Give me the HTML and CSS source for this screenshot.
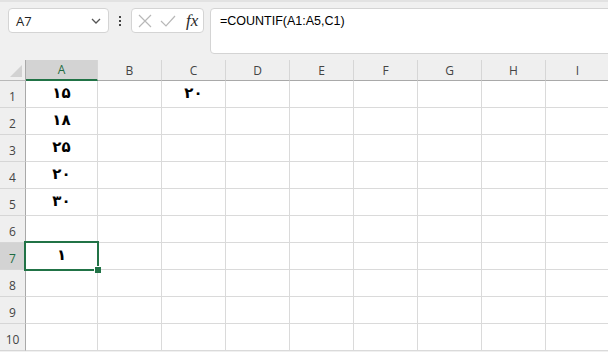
FILE: index.html
```html
<!DOCTYPE html>
<html lang="en">
<head>
    <meta charset="UTF-8">
    <title>COUNTIF</title>
    <link rel="stylesheet" href="styles.css">
</head>
<body>
    <div class="toolbar">
        <div class="name-box">
            <span class="name-text">A7</span>
            <svg class="chevron" width="10" height="6" viewBox="0 0 10 6"><path d="M1 1 L5 5 L9 1" fill="none" stroke="#555" stroke-width="1.3"/></svg>
        </div>
        <div class="grip"><i></i><i></i><i></i></div>
        <div class="fx-box">
            <svg width="14" height="14" viewBox="0 0 14 14"><path d="M1 1 L13 13 M13 1 L1 13" stroke="#b8b8b8" stroke-width="1.2" fill="none"/></svg>
            <svg width="16" height="14" viewBox="0 0 16 14"><path d="M1 7 L6 12 L15 2" stroke="#b8b8b8" stroke-width="1.2" fill="none"/></svg>
            <span class="fx">fx</span>
        </div>
        <div class="formula">=COUNTIF(A1:A5,C1)</div>
    </div>

    <div class="sheet">
        <div class="corner"><span class="tri"></span></div>
        <div class="col-head active">A</div>
        <div class="col-head">B</div>
        <div class="col-head">C</div>
        <div class="col-head">D</div>
        <div class="col-head">E</div>
        <div class="col-head">F</div>
        <div class="col-head">G</div>
        <div class="col-head">H</div>
        <div class="col-head">I</div>

        <div class="row-head">1</div><div class="cell">۱۵</div><div class="cell"></div><div class="cell">۲۰</div><div class="cell"></div><div class="cell"></div><div class="cell"></div><div class="cell"></div><div class="cell"></div><div class="cell"></div>
        <div class="row-head">2</div><div class="cell">۱۸</div><div class="cell"></div><div class="cell"></div><div class="cell"></div><div class="cell"></div><div class="cell"></div><div class="cell"></div><div class="cell"></div><div class="cell"></div>
        <div class="row-head">3</div><div class="cell">۲۵</div><div class="cell"></div><div class="cell"></div><div class="cell"></div><div class="cell"></div><div class="cell"></div><div class="cell"></div><div class="cell"></div><div class="cell"></div>
        <div class="row-head">4</div><div class="cell">۲۰</div><div class="cell"></div><div class="cell"></div><div class="cell"></div><div class="cell"></div><div class="cell"></div><div class="cell"></div><div class="cell"></div><div class="cell"></div>
        <div class="row-head">5</div><div class="cell">۳۰</div><div class="cell"></div><div class="cell"></div><div class="cell"></div><div class="cell"></div><div class="cell"></div><div class="cell"></div><div class="cell"></div><div class="cell"></div>
        <div class="row-head">6</div><div class="cell"></div><div class="cell"></div><div class="cell"></div><div class="cell"></div><div class="cell"></div><div class="cell"></div><div class="cell"></div><div class="cell"></div><div class="cell"></div>
        <div class="row-head active">7</div><div class="cell selected">۱</div><div class="cell"></div><div class="cell"></div><div class="cell"></div><div class="cell"></div><div class="cell"></div><div class="cell"></div><div class="cell"></div><div class="cell"></div>
        <div class="row-head">8</div><div class="cell"></div><div class="cell"></div><div class="cell"></div><div class="cell"></div><div class="cell"></div><div class="cell"></div><div class="cell"></div><div class="cell"></div><div class="cell"></div>
        <div class="row-head">9</div><div class="cell"></div><div class="cell"></div><div class="cell"></div><div class="cell"></div><div class="cell"></div><div class="cell"></div><div class="cell"></div><div class="cell"></div><div class="cell"></div>
        <div class="row-head">10</div><div class="cell"></div><div class="cell"></div><div class="cell"></div><div class="cell"></div><div class="cell"></div><div class="cell"></div><div class="cell"></div><div class="cell"></div><div class="cell"></div>
    </div>
</body>
</html>
```

FILE: styles.css
```css
body {
    margin: 0;
    width: 608px;
    height: 352px;
    overflow: hidden;
    background: #f0f0f0;
    font-family: "Open Sans", "Noto Sans", sans-serif;
}
.toolbar {
    height: 60px;
    box-sizing: border-box;
    border-top: 2px solid #e2e2e2;
    padding: 6px 0 0 8px;
    display: flex;
    align-items: flex-start;
}
.name-box {
    width: 101px;
    height: 25px;
    box-sizing: border-box;
    background: #fff;
    border: 1px solid #d4d4d4;
    border-radius: 4px;
    display: flex;
    align-items: center;
    justify-content: space-between;
    padding: 0 7px 0 7px;
}
.name-text {
    font-size: 13px;
    color: #1f1f1f;
}
.grip {
    width: 22px;
    height: 25px;
    display: flex;
    flex-direction: column;
    align-items: center;
    justify-content: center;
    gap: 2px;
}
.grip i {
    width: 2px;
    height: 2px;
    background: #444;
}
.fx-box {
    width: 73px;
    height: 25px;
    box-sizing: border-box;
    background: #fff;
    border: 1px solid #d4d4d4;
    border-radius: 4px;
    display: flex;
    align-items: center;
    gap: 8px;
    padding-left: 6px;
}
.fx {
    font-family: "Liberation Serif", serif;
    font-style: italic;
    font-size: 17px;
    color: #2a2a2a;
    margin-left: 2px;
}
.formula {
    flex: 1;
    height: 46px;
    margin-left: 6px;
    margin-right: -10px;
    box-sizing: border-box;
    background: #fff;
    border: 1px solid #d4d4d4;
    border-radius: 4px;
    padding: 5px 0 0 9px;
    font-family: "Liberation Sans", sans-serif;
    font-size: 12.5px;
    color: #000;
}

.sheet {
    display: grid;
    grid-template-columns: 26px 72px repeat(8, 64px);
    grid-template-rows: 21px repeat(10, 27px);
    background: #fff;
}
.corner, .col-head, .row-head {
    background: #efefef;
    box-sizing: border-box;
    color: #444;
    font-size: 12px;
}
.corner {
    border-right: 1px solid #a9a9a9;
    border-bottom: 1px solid #b9b9b9;
    position: relative;
}
.tri {
    position: absolute;
    right: 3px;
    bottom: 3px;
    width: 0;
    height: 0;
    border-left: 12px solid transparent;
    border-bottom: 12px solid #d2d2d2;
}
.col-head {
    border-right: 1px solid #d6d6d6;
    border-bottom: 1px solid #a9a9a9;
    display: flex;
    align-items: center;
    justify-content: center;
}
.col-head.active {
    background: #d3d3d3;
    border-bottom: 2px solid #217346;
    color: #1e6b41;
}
.row-head {
    border-right: 1px solid #a9a9a9;
    border-bottom: 1px solid #d6d6d6;
    display: flex;
    align-items: flex-end;
    justify-content: center;
    padding-bottom: 2px;
}
.row-head.active {
    background: #d3d3d3;
    color: #1e6b41;
}
.cell {
    box-sizing: border-box;
    border-right: 1px solid #dadada;
    border-bottom: 1px solid #dadada;
    display: flex;
    align-items: center;
    justify-content: center;
    font-family: "DejaVu Sans", sans-serif;
    font-weight: bold;
    font-size: 15px;
    color: #000;
    padding-bottom: 2px;
}
.cell.selected {
    position: relative;
}
.cell.selected::after {
    content: "";
    position: absolute;
    top: -2px;
    left: -2px;
    right: -2px;
    bottom: -2px;
    border: 2px solid #217346;
}
.cell.selected::before {
    content: "";
    position: absolute;
    right: -4px;
    bottom: -4px;
    width: 6px;
    height: 6px;
    background: #217346;
    border: 1px solid #fff;
    border-right: 0;
    border-bottom: 0;
    z-index: 1;
}
```
